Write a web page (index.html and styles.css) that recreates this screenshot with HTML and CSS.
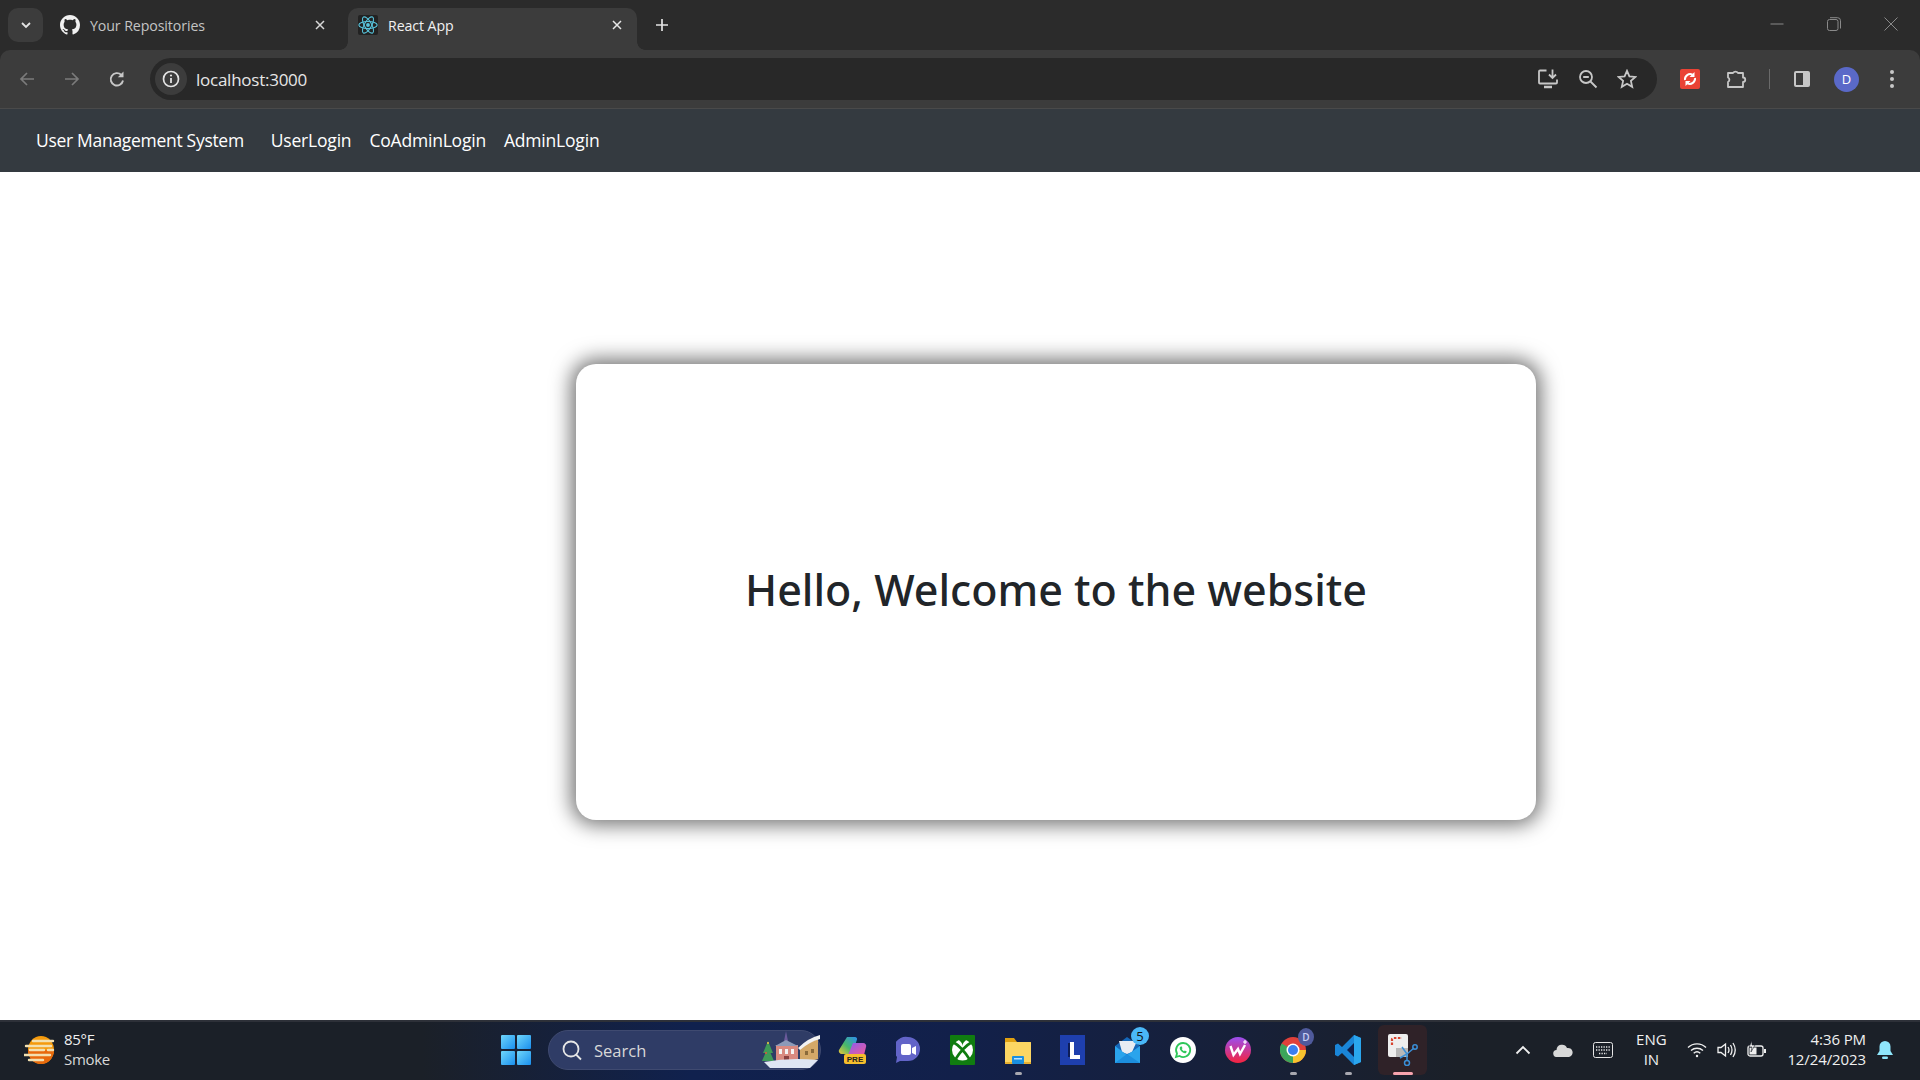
FILE: index.html
```html
<!DOCTYPE html>
<html lang="en">
<head>
<meta charset="utf-8">
<title>React App</title>
<link rel="stylesheet" href="styles.css">
</head>
<body>
<div class="browser">
  <div class="tabstrip">
    <div class="tab-search"><svg width="12" height="12" viewBox="0 0 12 12"><path d="M2 4l4 4 4-4" fill="none" stroke="#e3e3e3" stroke-width="1.800"/></svg></div>
    <div class="tab tab-inactive">
      <svg class="favicon" width="20" height="20" viewBox="0 0 16 16"><path fill="#f1f1f1" d="M8 0C3.580 0 0 3.580 0 8c0 3.540 2.290 6.530 5.470 7.590.4.070.55-.17.55-.38 0-.19-.01-.82-.01-1.490-2.010.37-2.530-.49-2.690-.94-.09-.23-.48-.94-.82-1.130-.28-.15-.68-.52-.01-.53.630-.01 1.080.58 1.230.82.720 1.210 1.870.87 2.330.66.070-.52.280-.87.510-1.070-1.780-.2-3.640-.89-3.640-3.950 0-.87.310-1.590.82-2.150-.08-.2-.36-1.020.08-2.120 0 0 .67-.21 2.200.82.640-.18 1.320-.27 2-.27s1.360.09 2 .27c1.530-1.040 2.200-.82 2.200-.82.440 1.100.160 1.920.080 2.120.51.560.82 1.270.82 2.150 0 3.070-1.870 3.750-3.650 3.950.29.250.54.730.54 1.480 0 1.070-.01 1.930-.01 2.200 0 .21.150.46.550.38A8.010 8.010 0 0 0 16 8c0-4.420-3.580-8-8-8z"/></svg>
      <span class="tab-title">Your Repositories</span>
      <svg class="tab-close" width="12" height="12" viewBox="0 0 12 12"><path d="M2 2l8 8M10 2l-8 8" stroke="#d8d8d8" stroke-width="1.500"/></svg>
    </div>
    <div class="tab tab-active">
      <span class="react-box"><svg width="20" height="20" viewBox="-12 -12 24 24" fill="none" stroke="#58c4dc" stroke-width="1.300"><circle r="2.300" fill="#58c4dc" stroke="none"/><ellipse rx="11" ry="4.300"/><ellipse rx="11" ry="4.300" transform="rotate(60)"/><ellipse rx="11" ry="4.300" transform="rotate(120)"/></svg></span>
      <span class="tab-title tab-title-active">React App</span>
      <svg class="tab-close" width="12" height="12" viewBox="0 0 12 12"><path d="M2 2l8 8M10 2l-8 8" stroke="#e8e8e8" stroke-width="1.500"/></svg>
    </div>
    <svg class="new-tab" width="14" height="14" viewBox="0 0 14 14"><path d="M7 1v12M1 7h12" stroke="#e3e3e3" stroke-width="1.700"/></svg>
    <div class="window-controls">
      <svg width="14" height="14" viewBox="0 0 14 14"><path d="M.5 7h13" stroke="#8a8a8a" stroke-width="1"/></svg>
      <svg width="14" height="14" viewBox="0 0 14 14" fill="none" stroke="#8a8a8a"><rect x=".5" y="2.500" width="10.500" height="11" rx="2"/><path d="M3 .7h7.500a3 3 0 0 1 3 3v7.800"/></svg>
      <svg width="14" height="14" viewBox="0 0 14 14"><path d="M.5.500l13 13M13.500.500l-13 13" stroke="#8a8a8a" stroke-width="1"/></svg>
    </div>
  </div>
  <div class="toolbar">
    <svg class="nav-icon" width="18" height="18" viewBox="0 0 18 18" fill="none" stroke="#7b7b7b" stroke-width="1.700"><path d="M16 9H3M9 3 3 9l6 6"/></svg>
    <svg class="nav-icon" width="18" height="18" viewBox="0 0 18 18" fill="none" stroke="#7b7b7b" stroke-width="1.700"><path d="M2 9h13M9 3l6 6-6 6"/></svg>
    <svg class="nav-icon" width="18" height="18" viewBox="0 0 18 18" fill="none" stroke="#c7c7c7" stroke-width="1.900"><path d="M15 10.500A6.200 6.200 0 1 1 13.200 4.800"/><path d="M15.500 1.500v5.700H9.800z" fill="#c7c7c7" stroke="none"/></svg>
    <div class="omnibox">
      <span class="site-info"><svg width="18" height="18" viewBox="0 0 18 18"><circle cx="9" cy="9" r="7.500" fill="none" stroke="#e3e3e3" stroke-width="1.700"/><path d="M9 8v5" stroke="#e3e3e3" stroke-width="1.800"/><circle cx="9" cy="5.500" r="1.100" fill="#e3e3e3"/></svg></span>
      <span class="url">localhost:3000</span>
      <span class="omni-icons">
        <svg width="22" height="22" viewBox="0 0 22 22" fill="none" stroke="#c7c7c7" stroke-width="1.800"><path d="M9.500 2.500H3a1 1 0 0 0-1 1v11a1 1 0 0 0 1 1h16a1 1 0 0 0 1-1v-3"/><path d="M7 19h8" stroke-width="2.500"/><path d="M15.500 1.500v8M12 6.500l3.500 3.500L19 6.500"/></svg>
        <svg width="20" height="20" viewBox="0 0 20 20" fill="none" stroke="#c7c7c7" stroke-width="1.800"><circle cx="8" cy="8" r="6"/><path d="M12.500 12.500 18.500 18.500M5.200 8h5.600"/></svg>
        <svg width="20" height="20" viewBox="0 0 20 20" fill="none" stroke="#c7c7c7" stroke-width="1.800"><path d="M10 1.800l2.400 5.500 6 .6-4.500 4 1.300 5.900-5.200-3.100-5.200 3.100 1.300-5.900-4.500-4 6-.6z"/></svg>
      </span>
    </div>
    <div class="ext-icons">
      <svg class="ext-sync" width="20" height="20" viewBox="0 0 20 20"><rect width="20" height="20" rx="2" fill="#ea4335"/><path d="M5 11a5.200 5.200 0 0 1 7.500-5.300M15 9a5.200 5.200 0 0 1-7.500 5.300" fill="none" stroke="#fff" stroke-width="2"/><path d="M14.500 3v5h-5zM5.500 17v-5h5z" fill="#fff"/></svg>
      <svg class="ext-puzzle" width="22" height="22" viewBox="0 0 22 22" fill="none" stroke="#c7c7c7" stroke-width="1.800"><path d="M3 5h5a3 3 0 0 1 5 0h5v4.500a2.200 2.200 0 0 1 0 4.500v5H3v-5a2.500 2.500 0 0 0 0-4.500z" stroke-linejoin="round"/></svg>
      <span class="ext-divider"></span>
      <svg class="ext-side" width="18" height="18" viewBox="0 0 18 18"><rect x="1" y="1" width="16" height="16" rx="2" fill="#c7c7c7"/><rect x="3" y="3" width="7" height="12" fill="#3c3c3c"/></svg>
      <span class="avatar">D</span>
      <svg class="ext-menu" width="6" height="20" viewBox="0 0 6 20" fill="#c7c7c7"><circle cx="3" cy="3" r="2"/><circle cx="3" cy="10" r="2"/><circle cx="3" cy="17" r="2"/></svg>
    </div>
  </div>
</div>

<nav class="navbar">
  <a class="brand">User Management System</a>
  <a class="nav-link">UserLogin</a>
  <a class="nav-link">CoAdminLogin</a>
  <a class="nav-link">AdminLogin</a>
</nav>

<main class="content">
  <section class="card"><h1>Hello, Welcome to the website</h1></section>
</main>

<footer class="taskbar">
  <div class="weather">
    <svg width="34" height="30" viewBox="0 0 34 30"><ellipse cx="17" cy="15" rx="13" ry="14" fill="#f59a0c"/><path d="M4 15a13 14 0 0 0 26 0z" fill="#e8690c"/><path d="M9 6h20M2 11h25M6 15h14M24 15h5M0 20h26M5 25h14" stroke="#f3e0b0" stroke-width="2.400" stroke-linecap="round"/></svg>
    <div class="weather-text"><span>85°F</span><span class="weather-sub">Smoke</span></div>
  </div>
  <div class="task-center">
    <svg class="win" width="30" height="30" viewBox="0 0 30 30"><defs><linearGradient id="w" x1="0" y1="0" x2="1" y2="1"><stop offset="0" stop-color="#6fd6fb"/><stop offset="1" stop-color="#1a8fee"/></linearGradient></defs><rect x="0" y="0" width="14" height="14" fill="url(#w)" rx="1"/><rect x="16" y="0" width="14" height="14" fill="url(#w)" rx="1"/><rect x="0" y="16" width="14" height="14" fill="url(#w)" rx="1"/><rect x="16" y="16" width="14" height="14" fill="url(#w)" rx="1"/></svg>
    <div class="search">
      <svg width="22" height="22" viewBox="0 0 22 22" fill="none" stroke="#e6e6e6" stroke-width="1.800"><circle cx="10" cy="10" r="7.500"/><path d="M15 15.500l5 5"/></svg>
      <span>Search</span>
      <svg class="search-art" width="58" height="38" viewBox="0 0 58 38"><path d="M24 0l2 10h-4z" fill="#6a5a9a"/><path d="M6 10l5 12H1zM6 16l6 14H0z" fill="#3f9a58"/><circle cx="6" cy="12" r="1" fill="#f5c542"/><circle cx="4" cy="22" r="1" fill="#e8503a"/><rect x="14" y="14" width="22" height="18" fill="#d98a80"/><path d="M13 15l11-6 12 6z" fill="#8c9ab8"/><rect x="17" y="18" width="3" height="5" fill="#f4f4f4"/><rect x="23" y="18" width="3" height="5" fill="#f4f4f4"/><rect x="29" y="18" width="3" height="5" fill="#f4f4f4"/><rect x="22" y="25" width="5" height="7" fill="#8a4040"/><path d="M38 18q9-8 18-10v20L38 33z" fill="#d4a868"/><path d="M36 17q10-10 22-13v4q-11 3-20 11z" fill="#f2f2f2"/><rect x="43" y="20" width="3" height="4" fill="#8a6a3a"/><rect x="49" y="18" width="3" height="4" fill="#8a6a3a"/><path d="M2 31q26-5 54-2l-8 8H8z" fill="#dfe6f2"/></svg>
    </div>
    <div class="apps">
      <span class="app"><svg width="29" height="30" viewBox="0 0 29 30"><defs><linearGradient id="cpa" x1="0" y1="1" x2="1" y2="0"><stop offset="0" stop-color="#f0c838"/><stop offset=".45" stop-color="#47b86a"/><stop offset="1" stop-color="#2d8ff0"/></linearGradient><linearGradient id="cpb" x1="0" y1="0" x2="1" y2="1"><stop offset="0" stop-color="#8a5cf0"/><stop offset="1" stop-color="#f05a9a"/></linearGradient></defs><path d="M9 2h8a2 2 0 0 1 2 2.500L14 19H4a3 3 0 0 1-3-4z" fill="url(#cpa)"/><path d="M15 8h10a3 3 0 0 1 3 4l-2 8H10z" fill="url(#cpb)"/><rect x="6" y="19" width="22" height="10" rx="2" fill="#f5be2c"/><text x="17" y="27" class="pre">PRE</text></svg></span>
      <span class="app"><svg width="24" height="28" viewBox="0 0 24 28"><path d="M12 1a12 12 0 0 1 0 24H4l-4 2 1-6a12 12 0 0 1 11-20z" fill="#6264c8"/><rect x="5" y="8" width="10" height="11" rx="2" fill="#fff"/><path d="M16 12l4-2v9l-4-2z" fill="#fff"/></svg></span>
      <span class="app"><svg width="25" height="30" viewBox="0 0 25 30"><rect width="25" height="30" rx="1" fill="#107c10"/><circle cx="12.500" cy="15" r="10.500" fill="#fff"/><path d="M3 7q9 5 17 18M22 7q-9 5-17 18" fill="none" stroke="#107c10" stroke-width="2.600"/><path d="M7 4q5.500 3 5.500 7 0-4 5.500-7z" fill="#107c10"/></svg></span>
      <span class="app running"><svg width="26" height="28" viewBox="0 0 26 28"><path d="M0 2h9l3 4h14v4H0z" fill="#e0a010"/><rect y="6" width="26" height="22" rx="1" fill="#fcd663"/><rect y="26" width="26" height="2" fill="#e8b030"/><rect x="7" y="20" width="12" height="8" rx="1" fill="#1a8fe0"/><rect x="9" y="22" width="8" height="1.500" fill="#bfe3ff"/></svg></span>
      <span class="app"><svg width="25" height="30" viewBox="0 0 25 30"><rect width="25" height="30" fill="#1e3fae"/><path d="M8 8h3v14H8z" fill="#0e1d58"/><path d="M10 7h4v13h6v4H10z" fill="#fff"/></svg></span>
      <span class="app mail"><svg width="25" height="26" viewBox="0 0 25 26"><path d="M0 9 12 0l13 9v17H0z" fill="#1567b8"/><path d="M4 4h18l-5 11-5 2-5-2z" fill="#e8ecf2"/><path d="M0 9l12 9 13-9v17H0z" fill="#2aa4ec"/><path d="M0 26l12-9 13 9z" fill="#1c8ede"/></svg><span class="badge">5</span></span>
      <span class="app"><svg width="26" height="26" viewBox="0 0 26 26"><circle cx="13" cy="13" r="13" fill="#fff"/><path d="M13 6a7 7 0 0 0-6 10.500L6 20l3.600-1A7 7 0 1 0 13 6z" fill="none" stroke="#2fc75a" stroke-width="1.800"/><path d="M10 10q-1 2 1.500 4.500T16 16l.8-1.500-2-1-.8.800q-1.500-.7-2.300-2.300l.8-.8-1-2z" fill="#2fc75a"/></svg></span>
      <span class="app"><svg width="26" height="26" viewBox="0 0 26 26"><defs><linearGradient id="wps" x1="0" y1="0" x2="0" y2="1"><stop offset="0" stop-color="#9a4ff0"/><stop offset="1" stop-color="#f5233f"/></linearGradient></defs><circle cx="13" cy="13" r="13" fill="url(#wps)"/><path d="M5.500 9l3 9 4.500-6 2 5 5-9" fill="none" stroke="#fff" stroke-width="2.400"/><path d="M20 3v4M18 5h4" stroke="#fff" stroke-width="1.200"/></svg></span>
      <span class="app running chrome"><svg width="26" height="26" viewBox="0 0 26 26"><circle cx="13" cy="13" r="13" fill="#e0403a"/><path d="M13 13 1.700 6.500A13 13 0 0 0 13 26z" fill="#3ba55a"/><path d="M13 13h13a13 13 0 0 1-13 13z" fill="#f7c32e"/><circle cx="13" cy="13" r="6.500" fill="#fff"/><circle cx="13" cy="13" r="5" fill="#3a7ff0"/></svg><span class="profile-badge">D</span></span>
      <span class="app running"><svg width="26" height="30" viewBox="0 0 26 30"><path d="M19 0l7 3v24l-7 3L7 18l-4 3.500-3-1.500v-10l3-1.500L7 12z" fill="#1a86d8"/><path d="M19 0l7 3v24l-7 3z" fill="#2aa6ee"/><path d="M19 8l-7 7 7 7z" fill="#0f1f4c"/></svg></span>
      <span class="app active"><svg width="30" height="32" viewBox="0 0 30 32"><rect x="0" y="0" width="20" height="23" rx="2" fill="#eee"/><path d="M4 11V5.500A1.500 1.500 0 0 1 5.500 4H14" fill="none" stroke="#d8432f" stroke-width="2.200" stroke-dasharray="2.500 1.500"/><rect x="8" y="14" width="12" height="9" fill="#b8b8b8"/><path d="M12 24l7-4 7-6M14 13l5 7 0 6" fill="none" stroke="#3a8fd8" stroke-width="1.500"/><circle cx="19" cy="29" r="2.500" fill="none" stroke="#3a8fd8" stroke-width="1.500"/><circle cx="27" cy="13" r="2.200" fill="none" stroke="#3a8fd8" stroke-width="1.500"/></svg></span>
    </div>
  </div>
  <div class="tray">
    <svg class="tray-chevron" width="16" height="10" viewBox="0 0 16 10"><path d="M1.500 8.500 8 2l6.500 6.500" fill="none" stroke="#f0f0f0" stroke-width="1.800"/></svg>
    <svg class="tray-cloud" width="20" height="14" viewBox="0 0 20 14"><path d="M4 14a3.500 3.500 0 0 1-.5-7A5.500 5.500 0 0 1 14 5a4.500 4.500 0 0 1 2 9z" fill="#d8d8d8"/></svg>
    <svg class="tray-kbd" width="20" height="16" viewBox="0 0 20 16"><rect x=".5" y=".5" width="19" height="15" rx="2" fill="none" stroke="#e6e6e6"/><path d="M3 5h14M3 8h14M6 11.500h8" stroke="#e6e6e6" stroke-width="1.300" stroke-dasharray="1.300 1.200"/></svg>
    <div class="lang"><span>ENG</span><span>IN</span></div>
    <svg class="tray-wifi" width="20" height="16" viewBox="0 0 20 16" fill="none" stroke="#f0f0f0" stroke-width="1.400"><path d="M1 5.500a13 13 0 0 1 18 0M4 8.500a9 9 0 0 1 12 0M6.700 11.200a5 5 0 0 1 6.600 0"/><circle cx="10" cy="14" r="1.200" fill="#f0f0f0" stroke="none"/></svg>
    <svg class="tray-vol" width="20" height="18" viewBox="0 0 20 18" fill="none" stroke="#f0f0f0" stroke-width="1.300"><path d="M1 6.500h3L8.500 3v12L4 11.500H1zM11 6q2 3 0 6M13.500 4q3 5 0 10M16 2q4.500 7 0 14"/></svg>
    <svg class="tray-batt" width="20" height="18" viewBox="0 0 20 18"><rect x="1" y="5" width="15" height="10" rx="2" fill="none" stroke="#f0f0f0" stroke-width="1.300"/><rect x="2.500" y="6.500" width="7" height="7" fill="#f0f0f0"/><rect x="17" y="8" width="2" height="4" fill="#f0f0f0"/><path d="M5 0 2 6h3l-1 5 4-7H5z" fill="#f0f0f0" stroke="#1b2028" stroke-width=".6"/></svg>
    <div class="clock"><span>4:36 PM</span><span>12/24/2023</span></div>
    <svg class="tray-bell" width="18" height="20" viewBox="0 0 18 20"><path d="M9 1a5.500 5.500 0 0 0-5.500 5.500V11L1 15h16l-2.500-4V6.500A5.500 5.500 0 0 0 9 1z" fill="#8fe6fb"/><rect x="6" y="16.500" width="6" height="2.500" rx="1.200" fill="#8fe6fb"/></svg>
  </div>
</footer>
</body>
</html>
```
FILE: styles.css
```css
* { box-sizing: border-box; }
html, body { margin: 0; height: 100%; }
body {
  display: flex;
  flex-direction: column;
  height: 1080px;
  overflow: hidden;
  background: #fff;
  font-family: "Open Sans", "Noto Sans", sans-serif;
  color: #212529;
}
svg { display: block; flex: none; }

/* browser chrome */
.browser { background: #2b2b2b; flex: none; }
.tabstrip {
  height: 50px;
  display: flex;
  align-items: flex-start;
  padding: 8px 0 0 8px;
}
.tab-search {
  width: 35px; height: 34px;
  background: #3c3c3c;
  border-radius: 10px;
  display: flex; align-items: center; justify-content: center;
}
.tab {
  height: 42px;
  display: flex;
  align-items: center;
  font-size: 14.200px;
}
.tab-inactive { width: 305px; padding: 0 22px 8px 17px; }
.tab-active {
  width: 289px;
  padding: 0 14px 8px 10px;
  background: #3c3c3c;
  border-radius: 10px 10px 0 0;
  position: relative;
}
.tab-active::before, .tab-active::after {
  content: "";
  position: absolute;
  bottom: 0;
  width: 8px; height: 8px;
}
.tab-active::before { left: -8px; background: radial-gradient(circle at 0 0, transparent 7.500px, #3c3c3c 8px); }
.tab-active::after { right: -8px; background: radial-gradient(circle at 100% 0, transparent 7.500px, #3c3c3c 8px); }
.tab-title { flex: 1; margin-left: 10px; color: #c4c4c4; white-space: nowrap; letter-spacing: -.1px; }
.tab-title-active { color: #f1f1f1; }
.react-box {
  width: 20px; height: 20px; background: #222;
  display: flex; align-items: center; justify-content: center;
  border-radius: 2px;
}
.new-tab { margin: 10px 0 0 18px; }
.window-controls {
  margin-left: auto;
  display: flex;
  gap: 43px;
  padding: 9px 22px 0 0;
}
.toolbar {
  height: 59px;
  background: #3c3c3c;
  border-radius: 10px 10px 0 0;
  border-bottom: 1px solid #4a4a4a;
  display: flex;
  align-items: center;
  padding-left: 18px;
}
.nav-icon { margin-right: 27px; }
.nav-icon:nth-child(3) { margin-right: 24px; }
.omnibox {
  width: 1507px;
  height: 42px;
  flex: none;
  background: #282828;
  border-radius: 21px;
  display: flex;
  align-items: center;
  padding: 0 20px 0 5px;
}
.site-info {
  width: 32px; height: 32px; border-radius: 50%;
  background: #3c3c3c;
  display: flex; align-items: center; justify-content: center;
}
.url { margin: 1px 0 0 9px; color: #e6e6e6; font-size: 17px; letter-spacing: -.25px; }
.omni-icons { margin-left: auto; display: flex; align-items: center; gap: 19px; }
.ext-icons { display: flex; align-items: center; margin-left: 23px; }
.ext-puzzle { margin-left: 25px; }
.ext-divider { width: 1px; height: 20px; background: #6a6a6a; margin: 0 23px 0 22px; }
.avatar {
  width: 25px; height: 25px; border-radius: 50%;
  background: #5a69c8; color: #fff;
  font-size: 13px;
  display: flex; align-items: center; justify-content: center;
  margin-left: 23px;
}
.ext-menu { margin-left: 30px; }

/* page navbar */
.navbar {
  flex: none;
  height: 63px;
  background: #343a40;
  display: flex;
  align-items: center;
  padding: 0 0 2px 36px;
  font-size: 17.500px;
  color: #fff;
}
.brand { margin-right: 27px; letter-spacing: -.3px; }
.nav-link { margin-right: 18px; letter-spacing: -.2px; }

/* page content */
.content {
  flex: 1;
  min-height: 0;
  padding: 192px 384px 0 576px;
}
.card {
  height: 456px;
  background: #fff;
  border-radius: 20px;
  box-shadow: 0 0 20px 5px rgba(0,0,0,.55);
  display: flex;
  align-items: center;
  justify-content: center;
}
.card h1 {
  margin: 0 0 4px;
  font-family: "Noto Sans", "Open Sans", sans-serif;
  font-size: 43px;
  font-weight: 500;
  line-height: 1.2;
}

/* taskbar */
.taskbar {
  flex: none;
  height: 60px;
  border-top: 2px solid #2d3038;
  padding-bottom: 2px;
  background: linear-gradient(90deg, #1b2028 0, #1b2028 22%, #10214e 36%, #12204a 50%, #172038 65%, #1b2028 76%, #1b2028 100%);
  display: flex;
  align-items: center;
  color: #f0f0f0;
  font-size: 15px;
}
.weather { display: flex; align-items: center; gap: 6px; padding-left: 24px; width: 500px; }
.weather-text { display: flex; flex-direction: column; line-height: 20px; font-size: 15px; letter-spacing: -.3px; margin-bottom: 2px; }
.weather-sub { color: #d8d8d8; }
.task-center { display: flex; align-items: center; }
.win { margin-left: 1px; }
.search {
  width: 273px; height: 40px;
  margin-left: 17px;
  border-radius: 20px;
  background: #2f3c66;
  border: 1px solid #3f4a70;
  display: flex;
  align-items: center;
  padding-left: 12px;
  font-size: 16.500px;
  color: #d8d8d8;
}
.search span { margin-left: 11px; }
.search-art { margin-left: auto; }
.apps { display: flex; align-items: center; margin-left: 4px; }
.app {
  width: 55px; height: 50px;
  display: flex; align-items: center; justify-content: center;
  position: relative;
}
.app.running::after, .app.active::after {
  content: "";
  position: absolute;
  bottom: 0; left: 50%;
  width: 7px; height: 3px;
  margin-left: -3px;
  border-radius: 2px;
  background: #a8a8b0;
}
.app.active { width: 49px; margin-left: 3px; background: #2f2228; border-radius: 6px; }
.app.active::after { width: 20px; margin-left: -10px; background: #f7a4ae; }
.pre { font: 700 8px "Liberation Sans", sans-serif; fill: #222; text-anchor: middle; }
.badge {
  position: absolute; top: 2px; right: 6px;
  width: 18px; height: 18px; border-radius: 50%;
  background: #4ab8f8; color: #111;
  font-size: 13px;
  display: flex; align-items: center; justify-content: center;
}
.profile-badge {
  position: absolute; top: 3px; right: 6px;
  width: 16px; height: 18px; border-radius: 50%;
  background: #4f5a9c; color: #c9d0f5;
  font-size: 10px; font-weight: 600;
  display: flex; align-items: center; justify-content: center;
}
.tray { margin-left: auto; display: flex; align-items: center; padding-right: 26px; }
.tray-cloud { margin-left: 22px; }
.tray-kbd { margin-left: 20px; }
.lang {
  display: flex; flex-direction: column; align-items: center;
  line-height: 20px; margin: 0 0 2px 18px; width: 40px;
}
.tray-wifi { margin-left: 16px; }
.tray-vol { margin-left: 10px; }
.tray-batt { margin-left: 10px; }
.clock {
  display: flex; flex-direction: column; align-items: flex-end;
  line-height: 20px; margin: 0 0 2px 20px; letter-spacing: -.1px;
}
.tray-bell { margin-left: 10px; }
```
